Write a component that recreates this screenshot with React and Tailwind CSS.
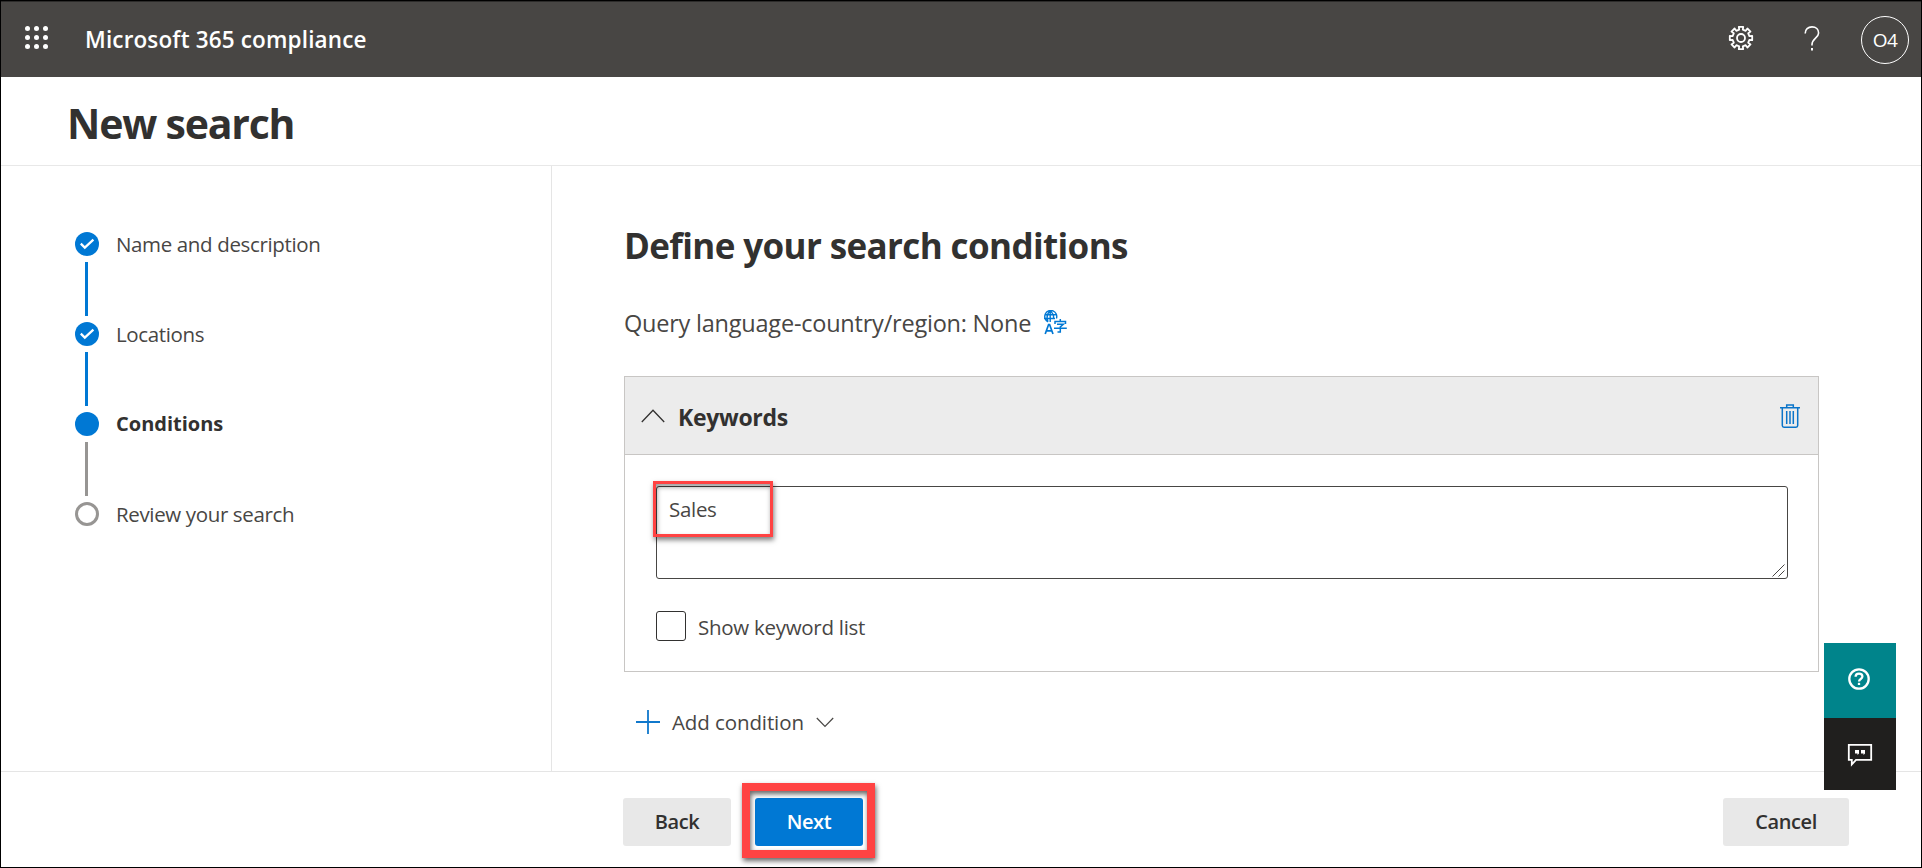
import React from "react";

const STEPS = [
  { label: "Name and description", state: "done" },
  { label: "Locations", state: "done" },
  { label: "Conditions", state: "current" },
  { label: "Review your search", state: "todo" },
];

function Header() {
  return (
    <header className="flex h-[76px] shrink-0 items-start bg-[#484644] text-white border-t border-[#2c2b2a]">
      <svg className="ml-[23px] mt-[23px] size-[26px]" viewBox="0 0 26 26" fill="#fff">
        {[3.5, 12.5, 21.5].map((y) =>
          [3.5, 12.5, 21.5].map((x) => <circle key={x + "-" + y} cx={x} cy={y} r="2.5" />)
        )}
      </svg>
      <div className="ml-[35px] mt-[22px] whitespace-nowrap text-[22.5px] leading-[32px] tracking-[0.15px] font-semibold">Microsoft 365 compliance</div>
      <div className="ml-auto flex items-start">
        <svg className="mt-[23px] size-[26px]" viewBox="-13 -13 26 26" fill="none" stroke="#fff" strokeWidth="1.8">
          <path strokeLinejoin="round" d="M-1.800-8.400-2.200-11.200H2.200L1.800-8.400 4.700-7.200 6.400-9.500 9.500-6.400 7.200-4.700 8.400-1.800 11.200-2.200V2.200L8.400 1.800 7.200 4.700 9.500 6.400 6.400 9.500 4.700 7.200 1.800 8.400 2.200 11.200H-2.200L-1.800 8.400-4.700 7.200-6.400 9.500-9.500 6.400-7.200 4.700-8.400 1.800-11.200 2.200V-2.200L-8.400-1.800-7.200-4.700-9.500-6.400-6.400-9.500-4.700-7.200Z" />
          <circle r="4" />
        </svg>
        <svg className="ml-[49px] mt-[24px] h-[26px] w-[18px]" viewBox="0 0 18 26" fill="none" stroke="#fff" strokeWidth="1.6">
          <path d="M2.200 7.500C2.200 3.500 5 .9 9 .9S15.600 3.500 15.600 7C15.600 12 9 12.500 9 18.500V19.500" />
          <path d="M9 22V24.500" strokeWidth="2" />
        </svg>
        <div className="ml-[40px] mr-[12px] mt-[14px] flex size-[48px] items-center justify-center rounded-full border border-white pt-px text-[19px] tracking-[-0.5px]">O4</div>
      </div>
    </header>
  );
}

function StepDot({ state }) {
  if (state === "todo") return <div className="size-6 rounded-full border-[3px] border-[#979593]" />;
  return (
    <div className="flex size-6 items-center justify-center rounded-full bg-[#0078d4]">
      {state === "done" && (
        <svg className="size-[16px]" viewBox="0 0 16 16" fill="none" stroke="#fff" strokeWidth="2.2">
          <path d="M1.800 7.600 5.800 11.600 14.400 3.600" />
        </svg>
      )}
    </div>
  );
}

function Steps() {
  return (
    <nav className="w-[551px] shrink-0 border-r border-[#e5e5e5] pl-[74px] pt-[66px]">
      {STEPS.map((s, i) => (
        <div key={s.label} className="flex h-[90px] gap-[17px]">
          <div className="flex w-6 flex-col items-center">
            <StepDot state={s.state} />
            {i < 3 && <div className={"mt-[6px] mr-px h-[54px] w-[3px] " + (s.state === "done" ? "bg-[#0078d4]" : "bg-[#979593]")} />}
          </div>
          <div className={"-mt-[2px] h-[28px] whitespace-nowrap leading-[28px] " + (s.state === "current" ? "text-[20px] font-bold text-[#323130]" : "text-[20.5px] tracking-[-0.36px] text-[#484644]")}>
            {s.label}
          </div>
        </div>
      ))}
    </nav>
  );
}

function LanguageIcon() {
  return (
    <svg className="mb-px h-[25px] w-[24px]" viewBox="0 0 24 25" fill="none" stroke="#0078d4" strokeWidth="1.400">
      <path d="M5 11.800A6 6 0 1 1 13.400 8.500M1.500 4.700H12.800M1 8.500H12M7.200 1V12M5 11.800C3.600 8 4 3.500 7.200 1 10 3 11 5 10.600 9" />
      <path d="M2.200 24 5.600 14.500H6.600L10 24M3.300 20.800H9" strokeWidth="1.700" />
      <path d="M17.300 9V11.500M12 14V11.500H22.500V14M14 14.300H20.300L17.300 16.800V22H14.500M11 18.200H23.800" strokeWidth="1.500" />
    </svg>
  );
}

function KeywordCard() {
  return (
    <section className="mt-[37px] h-[296px] w-[1195px] border border-[#c8c6c4]">
      <div className="flex h-[78px] items-center border-b border-[#c8c6c4] bg-[#ececec]">
        <svg className="ml-[16px] h-[14px] w-[24px]" viewBox="0 0 24 14" fill="none" stroke="#323130" strokeWidth="1.300">
          <path d="M.8 13 12 1.300 23.200 13" />
        </svg>
        <div className="ml-[13px] mt-[3px] whitespace-nowrap text-[23px] leading-[32px] tracking-[-0.3px] font-bold">Keywords</div>
        <svg className="ml-auto mr-[18px] h-[24px] w-[20px]" viewBox="0 0 20 24" fill="none" stroke="#0a74c9" strokeWidth="1.500">
          <path d="M0 3.700H20M6.700 3.500V1H13.300V3.500M2.300 4V21.500Q2.300 23.200 4 23.200H16Q17.700 23.200 17.700 21.500V4M6.700 7V20M10 7V20M13.300 7V20" />
        </svg>
      </div>
      <div className="pl-[31px] pt-[31px]">
        <div className="relative h-[93px] w-[1132px] rounded-[3px] border border-[#484644] pl-[12px] pt-[7px] text-[20.5px] leading-[30px] tracking-[-0.3px] text-[#484644]">
          Sales
          <div className="absolute -left-[4px] -top-[6px] h-[56px] w-[120px] border-[3px] border-[#ff4343] shadow-[1px_3px_5px_rgba(0,0,0,0.5),inset_1px_3px_5px_rgba(0,0,0,0.4)]" />
          <svg className="absolute bottom-[1px] right-[2px] size-[13px]" viewBox="0 0 13 13" stroke="#484644" strokeWidth="1">
            <path d="M.5 12.500 12.500.5M6.500 12.500 12.500 6.500" />
          </svg>
        </div>
        <div className="mt-[32px] flex items-center gap-[12px]">
          <div className="size-[30px] rounded-[3px] border border-[#323130]" />
          <div className="mt-[2px] whitespace-nowrap text-[20.5px] leading-[27px] tracking-[-0.28px] text-[#484644]">Show keyword list</div>
        </div>
      </div>
    </section>
  );
}

function SupportDock() {
  return (
    <div className="absolute left-[1823px] top-[642px] w-[72px]">
      <div className="flex h-[75px] items-center justify-center bg-[#00848b]">
        <svg className="mr-[3px] mt-[-3px] size-[22px]" viewBox="0 0 22 22" fill="none" stroke="#fff" strokeWidth="2.300">
          <circle cx="11" cy="11" r="9.700" />
          <path d="M7.600 8.800C7.600 6.800 9 5.700 11 5.700S14.400 7 14.400 8.600C14.400 11 11 11 11 13.500" />
          <path d="M11 14.800V17" />
        </svg>
      </div>
      <div className="flex h-[72px] items-center justify-center bg-[#201f1e]">
        <svg className="mr-px mt-px h-[24px] w-[26px]" viewBox="0 0 26 24">
          <path d="M1.800 1.800H24.200V16.800H9L4.800 21.500V16.800H1.800Z" fill="none" stroke="#fff" strokeWidth="1.800" />
          <path d="M8 7H12V10.500L10.500 12V10.500H8ZM14 7H18V10.500L16.500 12V10.500H14Z" fill="#fff" />
        </svg>
      </div>
    </div>
  );
}

function Footer() {
  return (
    <footer className="flex h-[96px] shrink-0 items-start border-t border-[#e5e5e5] pl-[622px] pt-[26px] text-[20px] font-semibold tracking-[-0.4px] text-[#323130]">
      <button className="h-[48px] w-[108px] rounded-[3px] bg-[#e8e8e8]">Back</button>
      <div className="relative ml-[24px]">
        <button className="h-[48px] w-[108px] rounded-[3px] bg-[#0078d4] text-white">Next</button>
        <div className="absolute -left-[13px] -top-[15px] h-[75px] w-[133px] border-8 border-[#ff4343] shadow-[1px_3px_5px_rgba(0,0,0,0.6),inset_1px_3px_5px_rgba(0,0,0,0.6)]" />
      </div>
      <button className="ml-[860px] h-[48px] w-[126px] rounded-[3px] bg-[#e8e8e8]">Cancel</button>
    </footer>
  );
}

export default function App() {
  return (
    <div className="relative flex h-[868px] w-[1922px] flex-col overflow-hidden border border-black bg-white font-['Open_Sans','Noto_Sans',sans-serif] text-[#323130]">
      <Header />
      <div className="h-[89px] shrink-0 border-b border-[#e8e8e8] pl-[66px] pt-[20px]">
        <h1 className="whitespace-nowrap text-[41px] leading-[52px] tracking-[-1.2px] font-bold">New search</h1>
      </div>
      <div className="flex min-h-0 flex-1">
        <Steps />
        <main className="pl-[72px] pt-[56px]">
          <h2 className="whitespace-nowrap text-[35px] leading-[48px] tracking-[-0.62px] font-bold">Define your search conditions</h2>
          <div className="mt-[37px] flex h-[32px] items-center gap-[12px] whitespace-nowrap text-[23.5px] leading-[32px] tracking-[-0.22px] text-[#484644]">
            Query language-country/region: None
            <LanguageIcon />
          </div>
          <KeywordCard />
          <div className="mt-[36px] ml-[12px] flex h-[28px] items-center">
            <svg className="size-[24px]" viewBox="0 0 24 24" stroke="#1078cc" strokeWidth="1.800"><path d="M12 0V24M0 12H24" /></svg>
            <span className="ml-[12px] whitespace-nowrap text-[20.5px] leading-[28px] tracking-[-0.1px] text-[#484644]">Add condition</span>
            <svg className="ml-[12px] h-[11px] w-[18px]" viewBox="0 0 18 11" fill="none" stroke="#484644" strokeWidth="1.200"><path d="M.8 1 9 9.500 17.200 1" /></svg>
          </div>
        </main>
      </div>
      <Footer />
      <SupportDock />
    </div>
  );
}
